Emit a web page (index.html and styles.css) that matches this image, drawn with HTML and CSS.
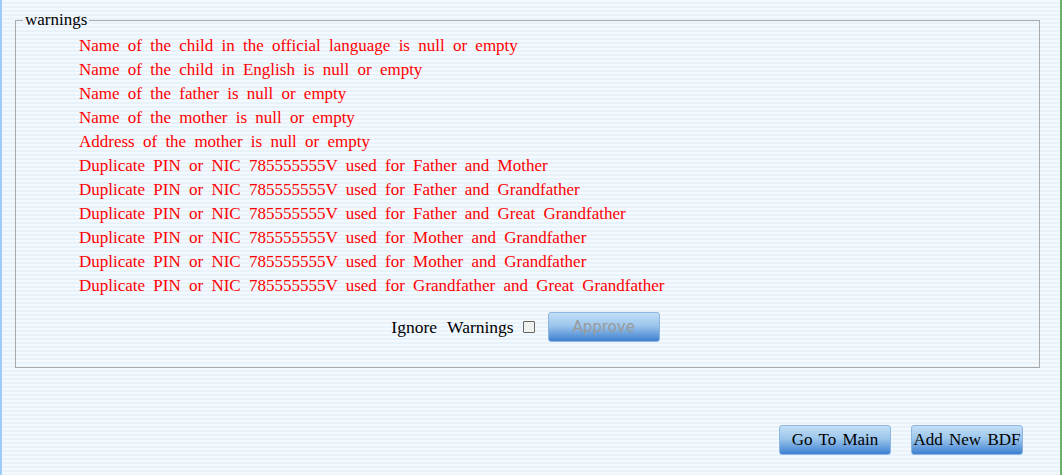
FILE: index.html
```html
<!DOCTYPE html>
<html>
<head>
<meta charset="utf-8">
<link rel="stylesheet" href="styles.css">
</head>
<body>
<div class="page">
  <fieldset class="warnings">
    <legend>warnings</legend>
    <ul class="warn-list">
      <li>Name of the child in the official language is null or empty</li>
      <li>Name of the child in English is null or empty</li>
      <li>Name of the father is null or empty</li>
      <li>Name of the mother is null or empty</li>
      <li>Address of the mother is null or empty</li>
      <li>Duplicate PIN or NIC 785555555V used for Father and Mother</li>
      <li>Duplicate PIN or NIC 785555555V used for Father and Grandfather</li>
      <li>Duplicate PIN or NIC 785555555V used for Father and Great Grandfather</li>
      <li>Duplicate PIN or NIC 785555555V used for Mother and Grandfather</li>
      <li>Duplicate PIN or NIC 785555555V used for Mother and Grandfather</li>
      <li>Duplicate PIN or NIC 785555555V used for Grandfather and Great Grandfather</li>
    </ul>
    <div class="approve-row">
      <label class="ignore">Ignore Warnings <span class="check"></span></label>
      <button class="btn btn-disabled" disabled>Approve</button>
    </div>
  </fieldset>
  <div class="actions">
    <button class="btn">Go To Main</button>
    <button class="btn">Add New BDF</button>
  </div>
</div>
</body>
</html>
```

FILE: styles.css
```css
html, body {
  margin: 0;
  padding: 0;
}
body {
  width: 1062px;
  height: 475px;
  overflow: hidden;
  font-family: "Liberation Serif", serif;
  font-size: 16px;
}
.page {
  box-sizing: border-box;
  height: 475px;
  border-left: 2px solid #9ccbfa;
  border-right: 2px solid #6cae6c;
  background: repeating-linear-gradient(to bottom, #f4f9fd 0, #f4f9fd 2px, #e8f2fb 2px, #e8f2fb 4px);
  padding: 10px 20px 0 13px;
}
.warnings {
  margin: 0;
  padding: 4px 0 0 0;
  border: 1px solid #a9a9a9;
  height: 358px;
  box-sizing: border-box;
}
.warnings legend {
  margin-left: 7px;
  padding: 0 2px 0 2px;
  color: #000;
  font-size: 17px;
}
.warn-list {
  list-style: none;
  margin: 0;
  padding: 0 0 0 63px;
}
.warn-list li {
  color: #ff0000;
  line-height: 24px;
  height: 24px;
  font-size: 17px;
  word-spacing: 4px;
  white-space: nowrap;
}
.approve-row {
  display: flex;
  justify-content: center;
  align-items: center;
  gap: 13px;
  margin-top: 14px;
  padding-right: 4px;
}
.ignore {
  display: flex;
  align-items: center;
  gap: 9px;
  word-spacing: 6px;
  font-size: 17.5px;
}
.check {
  display: inline-block;
  width: 10px;
  height: 10px;
  border: 1px solid #666;
  background: #eef2ee;
  border-radius: 1px;
}
.btn {
  width: 112px;
  height: 30px;
  border: 1px solid #8fb6e2;
  border-radius: 3px;
  background: linear-gradient(to bottom, #c2dff5 0%, #9cc6ec 45%, #3d80d0 100%);
  font-family: "Liberation Serif", serif;
  font-size: 17px;
  color: #000;
  padding: 0;
  word-spacing: 2px;
  white-space: nowrap;
}
.btn-disabled {
  color: #9a9a9a;
  font-family: "DejaVu Sans", sans-serif;
  font-size: 15px;
  word-spacing: 0;
}
.actions {
  display: flex;
  justify-content: flex-end;
  gap: 20px;
  margin-top: 57px;
  padding-right: 17px;
}
```
